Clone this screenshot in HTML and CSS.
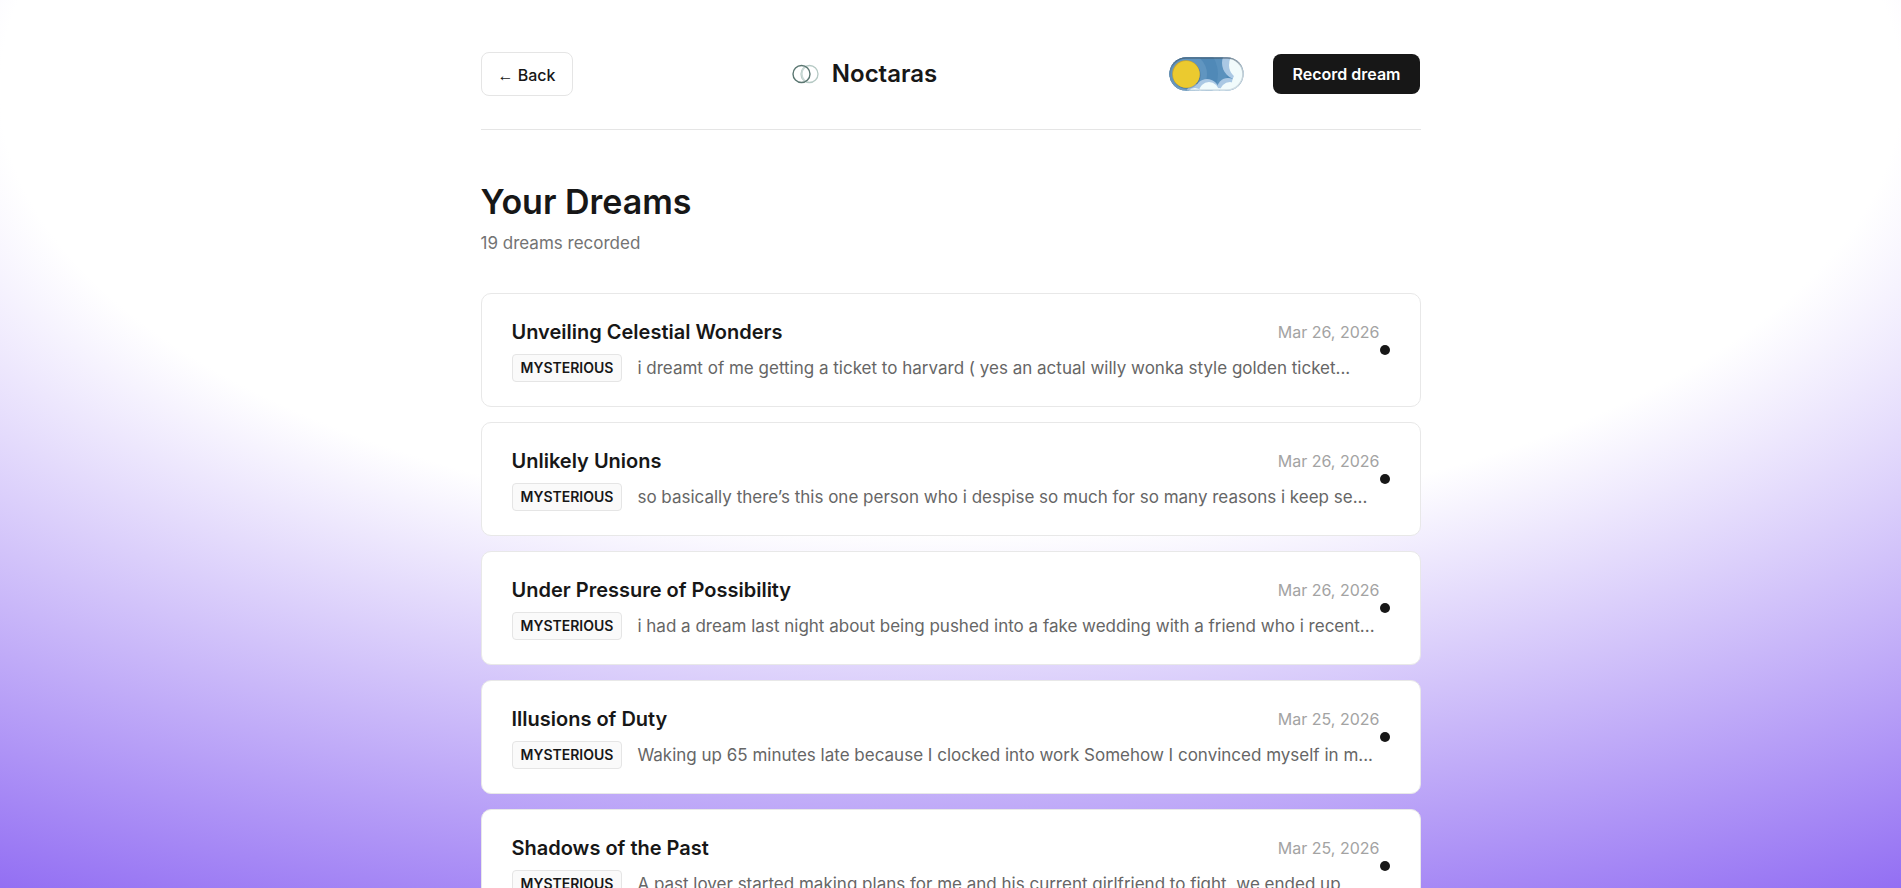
FILE: index.html
```html
<!DOCTYPE html>
<html lang="en">
<head>
<meta charset="utf-8">
<meta name="viewport" content="width=device-width, initial-scale=1">
<title>Noctaras</title>
<link rel="stylesheet" href="styles.css">
</head>
<body>
<div class="page">
  <header class="topbar">
    <button class="back" type="button"><span class="arrow">←</span> Back</button>
    <a class="brand" href="#">
      <svg class="brand-mark" viewBox="0 0 28 20" aria-hidden="true">
        <circle cx="17.5" cy="10" r="8.5" fill="none" stroke="#b5c9c4" stroke-width="1.3"/>
        <path d="M12.5 3.4C9 7 9 13 12.5 16.6" fill="none" stroke="#cbd9d6" stroke-width="1.6"/>
        <circle cx="9.5" cy="10" r="8.5" fill="none" stroke="#5a7671" stroke-width="1.4"/>
      </svg>
      <span>Noctaras</span>
    </a>
    <div class="actions">
      <label class="theme">
        <input type="checkbox" class="theme-input" aria-label="Dark theme">
        <svg class="theme-art" viewBox="0 0 75 34" aria-hidden="true">
          <defs>
            <clipPath id="pill"><rect x="0.5" y="0.5" width="74" height="33" rx="16.5"/></clipPath>
            <linearGradient id="rim" x1="0" y1="0" x2="0" y2="1">
              <stop offset="0" stop-color="#3d4f60" stop-opacity=".6"/>
              <stop offset=".3" stop-color="#56697a" stop-opacity=".35"/>
              <stop offset="1" stop-color="#9ab" stop-opacity=".35"/>
            </linearGradient>
          </defs>
          <g clip-path="url(#pill)">
            <rect width="75" height="34" fill="#4f8ab8"/>
            <circle cx="17" cy="17" r="41" fill="#5a91bd"/>
            <circle cx="17" cy="17" r="32" fill="#5089b7"/>
            <circle cx="17" cy="17" r="21" fill="#6095c0"/>
            <g fill="#aac8e4">
              <circle cx="70" cy="6" r="17"/><circle cx="59" cy="32" r="11"/>
              <circle cx="38" cy="34" r="12"/><circle cx="50" cy="39" r="9"/>
              <circle cx="27" cy="37" r="10"/>
            </g>
            <g fill="#f1fbfc">
              <circle cx="75" cy="8" r="15"/><circle cx="75" cy="26" r="12"/>
              <circle cx="61" cy="35" r="10"/><circle cx="50" cy="40" r="9"/>
              <circle cx="40" cy="35" r="10"/><circle cx="26" cy="40" r="9"/><circle cx="13" cy="43" r="10"/>
            </g>
          </g>
          <rect x="1" y="1" width="73" height="32" rx="16" fill="none" stroke="url(#rim)" stroke-width="1.6"/>
          <circle cx="17.8" cy="18" r="13.8" fill="#345" opacity=".3"/>
          <circle cx="17" cy="17" r="13.8" fill="#d0a828"/>
          <circle cx="17.3" cy="17.4" r="13.3" fill="#ebca2f"/>
        </svg>
      </label>
      <button class="record" type="button">Record dream</button>
    </div>
  </header>
  <main>
    <h1 class="title">Your Dreams</h1>
    <p class="count">19 dreams recorded</p>
    <ul class="dreams">
      <li class="card"><div class="body"><div class="row"><h2>Unveiling Celestial Wonders</h2><time datetime="2026-03-26">Mar 26, 2026</time></div><div class="meta"><span class="tag">MYSTERIOUS</span><p>i dreamt of me getting a ticket to harvard ( yes an actual willy wonka style golden ticket...</p></div></div><span class="dot"></span></li>
      <li class="card"><div class="body"><div class="row"><h2>Unlikely Unions</h2><time datetime="2026-03-26">Mar 26, 2026</time></div><div class="meta"><span class="tag">MYSTERIOUS</span><p>so basically there’s this one person who i despise so much for so many reasons i keep se...</p></div></div><span class="dot"></span></li>
      <li class="card"><div class="body"><div class="row"><h2>Under Pressure of Possibility</h2><time datetime="2026-03-26">Mar 26, 2026</time></div><div class="meta"><span class="tag">MYSTERIOUS</span><p>i had a dream last night about being pushed into a fake wedding with a friend who i recent...</p></div></div><span class="dot"></span></li>
      <li class="card"><div class="body"><div class="row"><h2>Illusions of Duty</h2><time datetime="2026-03-25">Mar 25, 2026</time></div><div class="meta"><span class="tag">MYSTERIOUS</span><p>Waking up 65 minutes late because I clocked into work Somehow I convinced myself in m...</p></div></div><span class="dot"></span></li>
      <li class="card"><div class="body"><div class="row"><h2>Shadows of the Past</h2><time datetime="2026-03-25">Mar 25, 2026</time></div><div class="meta"><span class="tag">MYSTERIOUS</span><p>A past lover started making plans for me and his current girlfriend to fight, we ended up</p></div></div><span class="dot"></span></li>
    </ul>
  </main>
</div>
</body>
</html>
```
FILE: styles.css
```css
* { box-sizing: border-box; }

body {
  margin: 0;
  height: 100vh;
  overflow: hidden;
  font-family: Inter, "Liberation Sans", sans-serif;
  color: #171717;
  background: radial-gradient(125% 125% at 50% 10%, #fff 40%, #63e 100%);
}

.page {
  max-width: 940px;
  margin: 0 auto;
  padding-top: 52px;
}

.topbar {
  display: flex;
  align-items: center;
  justify-content: space-between;
  padding-bottom: 33px;
  border-bottom: 1px solid #e5e5e5;
}

.back {
  height: 44px;
  padding: 2px 16px 0;
  border: 1px solid #e5e5e5;
  border-radius: 8px;
  background: #fff;
  color: inherit;
  font: 500 16px/20px Inter, sans-serif;
}

.arrow { font-family: "Liberation Sans", sans-serif; }

.brand {
  display: flex;
  align-items: center;
  gap: 12px;
  padding-right: 12px;
  color: inherit;
  font-size: 24px;
  font-weight: 600;
  line-height: 30px;
  text-decoration: none;
}

.brand-mark { width: 28px; height: 20px; }

.actions {
  display: flex;
  align-items: center;
  gap: 29px;
}

.theme { position: relative; display: block; height: 34px; }

.theme-input {
  position: absolute;
  inset: 0;
  width: 100%;
  height: 100%;
  margin: 0;
  opacity: 0;
}

.theme-art { display: block; width: 75px; height: 34px; }

.record {
  height: 40px;
  padding: 0 20px;
  border: 0;
  border-radius: 8px;
  background: #171717;
  color: #fff;
  font: 600 16px/20px Inter, sans-serif;
}

.title {
  margin: 48px 0 0;
  font-size: 34px;
  font-weight: 600;
  line-height: 48px;
}

.count {
  margin: 5px 0 0;
  color: #737373;
  font-size: 17px;
  line-height: 24px;
}

.dreams {
  display: grid;
  grid-template-columns: minmax(0, 1fr);
  gap: 15px;
  margin: 38px 0 0;
  padding: 0;
  list-style: none;
}

.card {
  display: flex;
  align-items: center;
  padding: 24px 30px;
  border: 1px solid #e8e8e8;
  border-radius: 10px;
  background: #fff;
}

.body { flex: 1; min-width: 0; }

.row {
  display: flex;
  align-items: center;
  justify-content: space-between;
}

.row h2 {
  margin: 0;
  font-size: 20px;
  font-weight: 600;
  line-height: 28px;
}

.row time {
  color: #a3a3a3;
  font-size: 16px;
  line-height: 28px;
}

.meta {
  display: flex;
  align-items: center;
  gap: 15px;
  margin-top: 8px;
}

.tag {
  flex: none;
  padding: 4px 8px;
  border: 1px solid #e5e5e5;
  border-radius: 4px;
  background: #fafafa;
  font-size: 14px;
  font-weight: 600;
  line-height: 18px;
}

.meta p {
  min-width: 0;
  margin: 0;
  overflow: hidden;
  color: #666;
  font-size: 17px;
  line-height: 28px;
  text-overflow: ellipsis;
  white-space: nowrap;
}

.dot {
  flex: none;
  width: 10px;
  height: 10px;
  border-radius: 50%;
  background: #171717;
}
```
